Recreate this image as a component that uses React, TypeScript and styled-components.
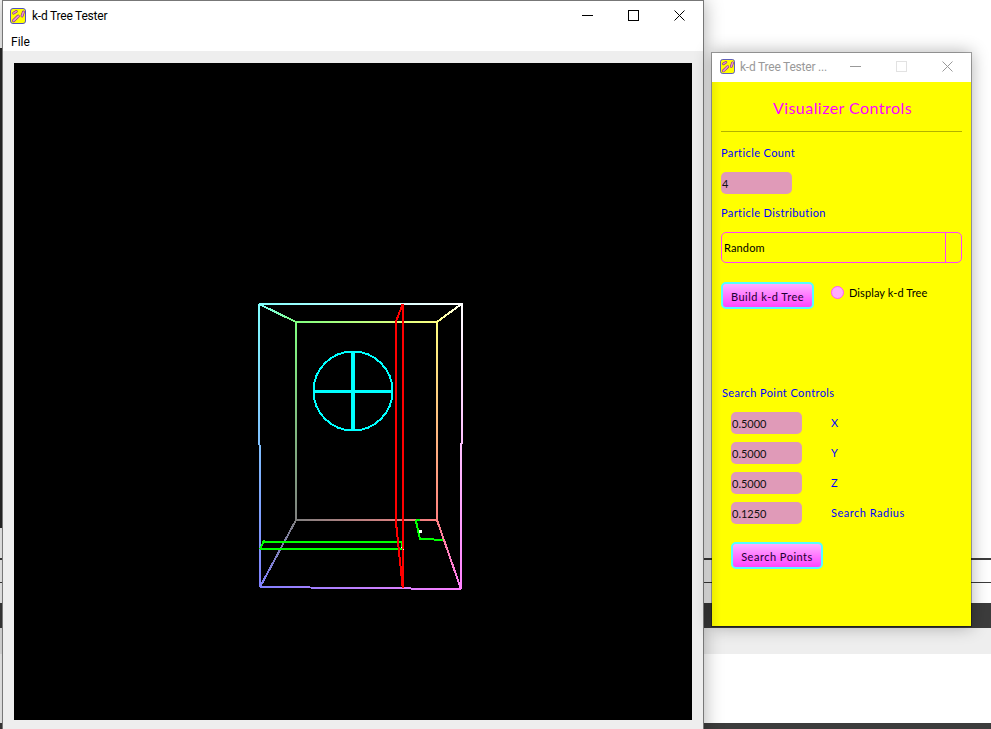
import React from "react";
import styled, { createGlobalStyle } from "styled-components";

const Global = createGlobalStyle`
  html, body { margin: 0; padding: 0; background: #fff; overflow: hidden; }
  #root { width: 991px; height: 729px; }
`;

const ui = `"Roboto", "Open Sans", sans-serif`;
const playful = `"Lato", "Open Sans", sans-serif`;

const Desktop = styled.div`
  position: relative;
  width: 991px;
  height: 729px;
  overflow: hidden;
  background: #fff;
  font-family: ${ui};
`;

const Backdrop = styled.div`
  display: flex;
  flex-direction: column;
  height: 100%;
`;

const BackRow = styled.div<{ $h: number; $bg?: string }>`
  height: ${(p) => p.$h}px;
  background: ${(p) => p.$bg ?? "#fff"};
  flex: none;
`;

const EdgeStrip = styled.div<{ $h: number }>`
  height: ${(p) => p.$h}px;
  width: 3px;
  background: #2a2a2a;
  flex: none;
`;

const MainWindow = styled.section`
  position: absolute;
  left: 2px;
  top: 0;
  width: 702px;
  height: 740px;
  box-sizing: border-box;
  border: 1px solid #777;
  background: #eee;
  box-shadow: 0 0 18px rgba(0, 0, 0, 0.32);
  display: flex;
  flex-direction: column;
`;

const TitleBar = styled.header<{ $h: number; $pad: number }>`
  height: ${(p) => p.$h}px;
  flex: none;
  box-sizing: border-box;
  background: #fff;
  display: flex;
  align-items: center;
  padding-left: ${(p) => p.$pad}px;
  padding-bottom: 2px;
`;

const TitleText = styled.span<{ $dim?: boolean }>`
  font-size: 12px;
  line-height: 16px;
  margin-left: ${(p) => (p.$dim ? 5 : 6)}px;
  color: ${(p) => (p.$dim ? "#999" : "#000")};
  letter-spacing: -0.22px;
  white-space: nowrap;
`;

const Controls = styled.div<{ $gap: number; $right: number }>`
  margin-left: auto;
  margin-right: ${(p) => p.$right}px;
  display: flex;
  gap: ${(p) => p.$gap}px;
  align-items: center;
`;

const MenuBar = styled.nav`
  height: 19px;
  flex: none;
  box-sizing: border-box;
  background: #fff;
  font-size: 12px;
  line-height: 18px;
  padding: 1px 0 0 8px;
  color: #000;
`;

const CanvasArea = styled.div`
  padding: 12px 10px 0 11px;
`;

const Scene = styled.svg`
  display: block;
  width: 678px;
  height: 657px;
  background: #000;
  shape-rendering: crispEdges;
`;

const PanelWindow = styled.section`
  position: absolute;
  left: 711px;
  top: 52px;
  width: 261px;
  height: 575px;
  box-sizing: border-box;
  border: 1px solid rgba(0, 0, 0, 0.33);
  background-clip: padding-box;
  background-color: #fff;
  box-shadow: 0 0 16px rgba(0, 0, 0, 0.3);
  display: flex;
  flex-direction: column;
`;

const Panel = styled.div`
  flex: 1;
  background: linear-gradient(90deg, #eded00 0, #ffff00 9px);
  padding: 0 9px;
  font-family: ${playful};
  font-size: 11px;
  display: flex;
  flex-direction: column;
  align-items: flex-start;
`;

const Heading = styled.h1`
  margin: 15px 0 0;
  align-self: stretch;
  text-align: center;
  font-size: 16px;
  line-height: 22px;
  font-weight: 400;
  color: #ff00ff;
  font-family: ${playful};
  letter-spacing: 0.45px;
  padding-left: 2px;
`;

const Rule = styled.hr`
  margin: 12px 0 0;
  border: 0;
  height: 1px;
  align-self: stretch;
  background: #b2b200;
`;

const Label = styled.label<{ $mt: number; $ml?: number }>`
  display: block;
  margin-top: ${(p) => p.$mt}px;
  margin-left: ${(p) => p.$ml ?? 0}px;
  line-height: 14px;
  color: #0000ff;
  letter-spacing: 0.4px;
  white-space: nowrap;
`;

const Field = styled.div<{ $mt?: number }>`
  width: 71px;
  height: 22px;
  margin-top: ${(p) => p.$mt ?? 0}px;
  box-sizing: border-box;
  border-radius: 5px;
  background: #e09ab8;
  color: #111;
  line-height: 23px;
  padding-left: 1px;
`;

const Select = styled.div`
  margin-top: 12px;
  align-self: stretch;
  height: 31px;
  box-sizing: border-box;
  border: 1px solid #ff40ff;
  border-radius: 5px;
  display: flex;
  align-items: center;
  color: #000;
`;

const SelectValue = styled.span`
  flex: 1;
  padding-left: 2px;
  letter-spacing: 0.15px;
`;

const SelectArrow = styled.span`
  width: 15px;
  height: 100%;
  border-left: 1px solid #ff40ff;
`;

const BuildRow = styled.div`
  margin-top: 19px;
  display: flex;
  align-items: flex-start;
`;

const PinkButton = styled.button<{ $w: number; $mt?: number; $ml?: number }>`
  width: ${(p) => p.$w}px;
  height: 27px;
  margin-top: ${(p) => p.$mt ?? 0}px;
  margin-left: ${(p) => p.$ml ?? 0}px;
  box-sizing: border-box;
  border: 2px solid #55ffff;
  border-radius: 5px;
  background: linear-gradient(180deg, #ffb0ff 0%, #ff44ff 100%);
  color: #1a0030;
  font-family: ${playful};
  font-size: 11px;
  letter-spacing: 0.5px;
  padding: 1px 0 0;
`;

const Toggle = styled.div`
  margin-left: 17px;
  margin-top: 4px;
  display: flex;
  align-items: center;
  color: #000;
  gap: 5px;
  letter-spacing: 0.1px;
  white-space: nowrap;
`;

const RadioDot = styled.span`
  width: 13px;
  height: 13px;
  box-sizing: border-box;
  border-radius: 50%;
  background: #ffaaff;
  border: 1px solid #ff55ff;
`;

const CoordRow = styled.div<{ $mt: number }>`
  margin-top: ${(p) => p.$mt}px;
  margin-left: 10px;
  display: flex;
  align-items: center;
  gap: 29px;
`;

const CoordName = styled.span`
  color: #0000ff;
  letter-spacing: 0.5px;
  white-space: nowrap;
  position: relative;
  top: -1px;
`;

const Capsule = ({ d, w }: { d: string; w: number }) => (
  <>
    <path d={d} stroke="#7a2f8a" strokeWidth={w + 1.2} strokeLinecap="round" fill="none" />
    <path d={d} stroke="#f090d0" strokeWidth={w} strokeLinecap="round" fill="none" />
  </>
);

const AppIcon = ({ size }: { size: number }) => (
  <svg width={size} height={size} viewBox="0 0 16 16">
    <rect x="0.5" y="0.5" width="15" height="15" rx="2.5" fill="#ffff00" stroke="#5050c0" />
    <Capsule d="M3.6 12.6L8.2 8.2" w={1.9} />
    <Capsule d="M12 8L13.4 4" w={1.6} />
    <Capsule d="M3.6 5.2L6.4 3.4" w={1.4} />
  </svg>
);

const WinButtons = ({ color, box }: { color: string; box: string }) => (
  <>
    <svg width="12" height="12" viewBox="0 0 12 12"><path d="M0 5.5H11" stroke={color} fill="none" /></svg>
    <svg width="12" height="12" viewBox="0 0 12 12"><rect x="0.5" y="0.5" width="10" height="10" stroke={box} fill="none" /></svg>
    <svg width="12" height="12" viewBox="0 0 12 12"><path d="M0.5 0.5L10.5 10.5M10.5 0.5L0.5 10.5" stroke={color} fill="none" /></svg>
  </>
);

type Pt = [number, number];
const corner = {
  oTL: [259, 304] as Pt, oTR: [462, 303.5] as Pt, oBL: [260, 587] as Pt, oBR: [461, 589] as Pt,
  iTL: [296, 322] as Pt, iTR: [437, 322] as Pt, iBL: [296, 520] as Pt, iBR: [437, 520] as Pt,
};
const tint = {
  oTL: "#80ffff", oTR: "#ffffff", oBL: "#8080ff", oBR: "#ff80ff",
  iTL: "#80ff80", iTR: "#ffff80", iBL: "#808080", iBR: "#ff8080",
};
type C = keyof typeof corner;
const edges: [C, C][] = [
  ["iBL", "iBR"], ["iTL", "iBL"], ["iTR", "iBR"], ["iTL", "iTR"],
  ["oTL", "iTL"], ["oTR", "iTR"], ["oBL", "iBL"], ["oBR", "iBR"],
  ["oTL", "oTR"], ["oTL", "oBL"], ["oTR", "oBR"], ["oBL", "oBR"],
];

const ColourCube = () => (
  <>
    <defs>
      {edges.map(([a, b]) => (
        <linearGradient key={a + b} id={a + b} gradientUnits="userSpaceOnUse"
          x1={corner[a][0]} y1={corner[a][1]} x2={corner[b][0]} y2={corner[b][1]}>
          <stop offset="0" stopColor={tint[a]} />
          <stop offset="1" stopColor={tint[b]} />
        </linearGradient>
      ))}
    </defs>
    {edges.map(([a, b]) => (
      <path key={a + b} d={`M${corner[a].join(" ")}L${corner[b][0] + 0.01} ${corner[b][1] + 0.01}`}
        stroke={`url(#${a + b})`} strokeWidth="2" fill="none" />
    ))}
  </>
);

const Tree = () => (
  <g fill="none">
    <g stroke="#00ff00" strokeWidth="2">
      <path d="M260.5 548.5L401.7 549.5V542.5L263.5 541.5Z" />
      <path d="M415.7 520L420 539L443 539.8" />
      <path d="M415.7 520.2H420" />
    </g>
    <g stroke="#ff0000" strokeWidth="2">
      <path d="M395.8 520.5V322L402.7 304V587.5L395.8 520.5" />
    </g>
    <g stroke="#00ffff">
      <circle cx="353" cy="391" r="39.5" strokeWidth="2" />
      <path d="M353 352V431" strokeWidth="4" />
      <path d="M313 391H393" strokeWidth="3" />
    </g>
    <rect x="419" y="530" width="3" height="3" fill="#fff" />
    <rect x="401" y="547" width="1" height="1" fill="#fff" />
    <rect x="403" y="549" width="1" height="1" fill="#fff" />
  </g>
);

export default function App() {
  return (
    <Desktop>
      <Global />
      <Backdrop>
        <BackRow $h={48} />
        <EdgeStrip $h={480} />
        <BackRow $h={30} />
        <BackRow $h={2} $bg="#3c3c3c" />
        <BackRow $h={22} />
        <BackRow $h={1} $bg="#3c3c3c" />
        <BackRow $h={20} />
        <BackRow $h={25} $bg="#3c3c3c" />
        <BackRow $h={26} $bg="#eeeeee" />
        <BackRow $h={69} />
        <BackRow $h={6} $bg="#3c3c3c" />
      </Backdrop>

      <MainWindow>
        <TitleBar $h={31} $pad={7}>
          <AppIcon size={16} />
          <TitleText>k-d Tree Tester</TitleText>
          <Controls $gap={34} $right={17}>
            <WinButtons color="#000" box="#000" />
          </Controls>
        </TitleBar>
        <MenuBar>File</MenuBar>
        <CanvasArea>
          <Scene viewBox="14 63 678 657">
            <ColourCube />
            <Tree />
          </Scene>
        </CanvasArea>
      </MainWindow>

      <PanelWindow>
        <TitleBar $h={29} $pad={8}>
          <AppIcon size={15} />
          <TitleText $dim>k-d Tree Tester ...</TitleText>
          <Controls $gap={34} $right={17}>
            <WinButtons color="#999" box="#e2e2e2" />
          </Controls>
        </TitleBar>
        <Panel>
          <Heading>Visualizer Controls</Heading>
          <Rule />
          <Label $mt={14}>Particle Count</Label>
          <Field $mt={12}>4</Field>
          <Label $mt={12}>Particle Distribution</Label>
          <Select>
            <SelectValue>Random</SelectValue>
            <SelectArrow />
          </Select>
          <BuildRow>
            <PinkButton $w={93}>Build k-d Tree</PinkButton>
            <Toggle>
              <RadioDot />
              Display k-d Tree
            </Toggle>
          </BuildRow>
          <Label $mt={77} $ml={1}>Search Point Controls</Label>
          <CoordRow $mt={12}>
            <Field>0.5000</Field>
            <CoordName>X</CoordName>
          </CoordRow>
          <CoordRow $mt={8}>
            <Field>0.5000</Field>
            <CoordName>Y</CoordName>
          </CoordRow>
          <CoordRow $mt={8}>
            <Field>0.5000</Field>
            <CoordName>Z</CoordName>
          </CoordRow>
          <CoordRow $mt={8}>
            <Field>0.1250</Field>
            <CoordName>Search Radius</CoordName>
          </CoordRow>
          <PinkButton $w={92} $mt={18} $ml={10}>Search Points</PinkButton>
        </Panel>
      </PanelWindow>
    </Desktop>
  );
}
